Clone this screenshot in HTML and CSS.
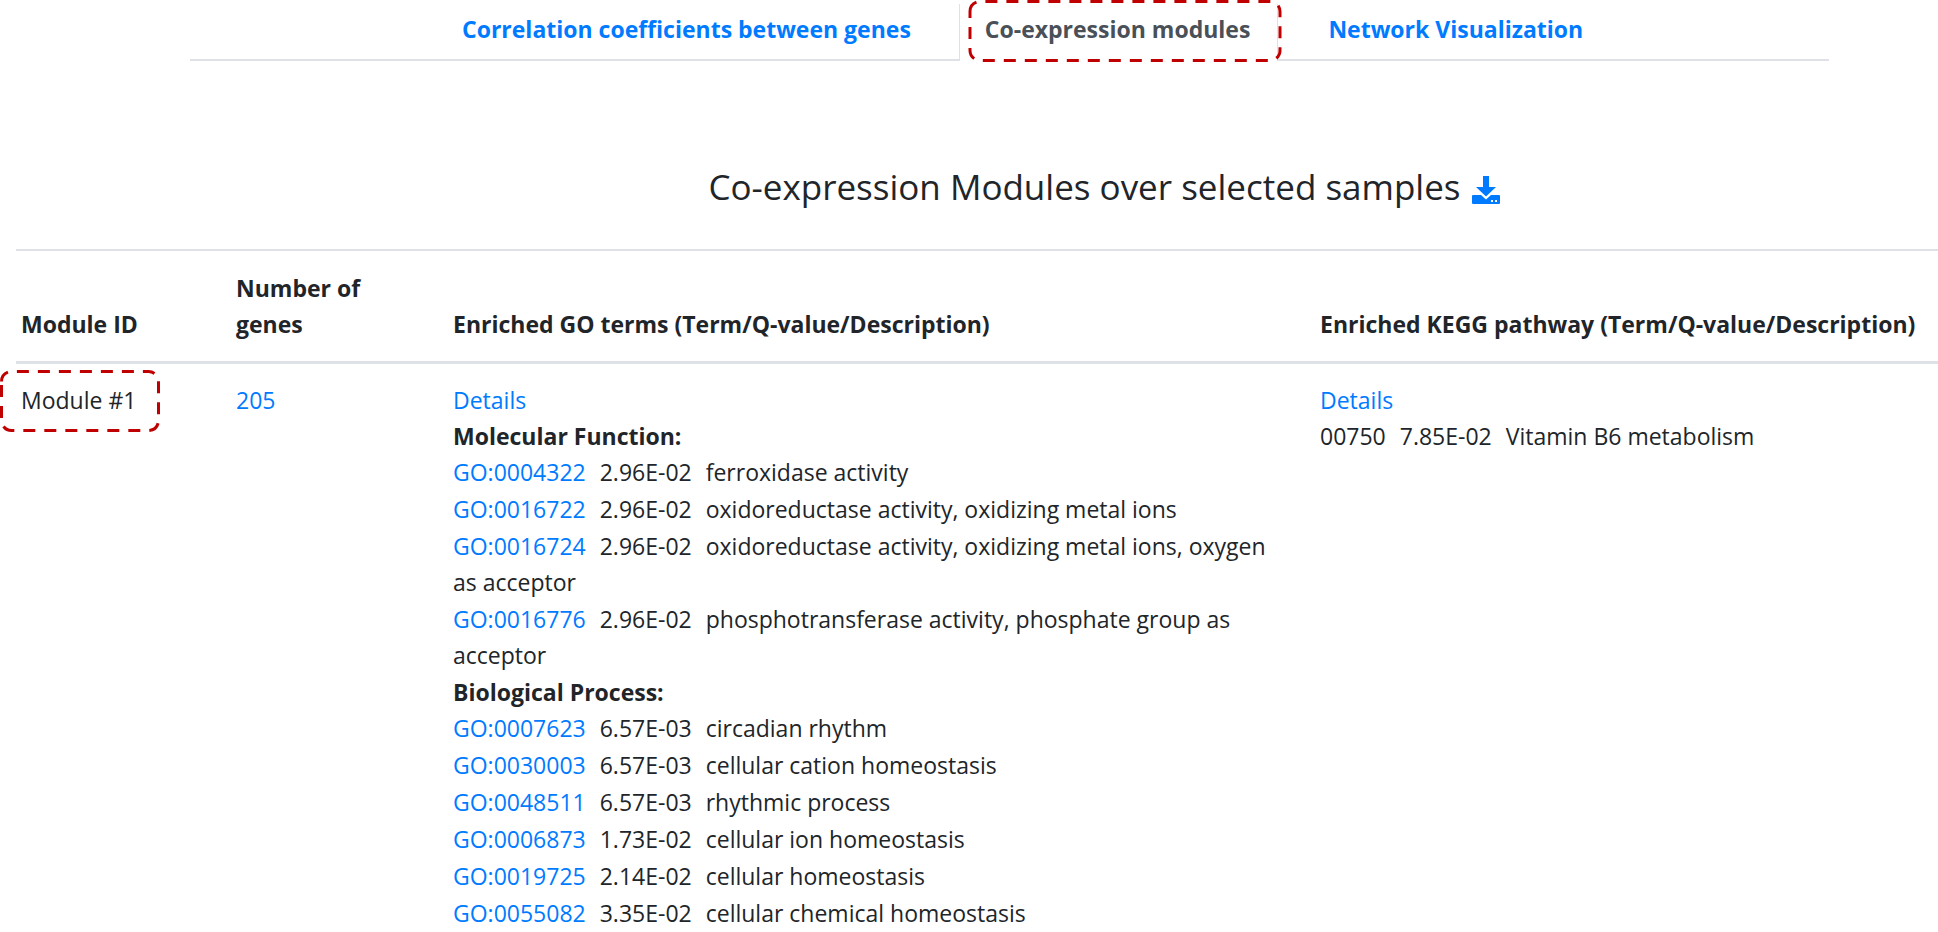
FILE: index.html
```html
<!DOCTYPE html>
<html lang="en">
<head>
<meta charset="utf-8">
<title>Co-expression modules</title>
<link rel="stylesheet" href="styles.css">
</head>
<body>
<nav class="tabs" aria-label="Results">
  <a class="tab" href="#correlation">Correlation coefficients between genes</a>
  <a class="tab tab-active" href="#modules" aria-current="page">Co-expression modules
    <svg class="outline outline-tab" width="314" height="62" aria-hidden="true"><path d="M2 11.500a10 10 0 0 1 10-10h290a10 10 0 0 1 10 10v39a10 10 0 0 1-10 10h-290a10 10 0 0 1-10-10z"/></svg>
  </a>
  <a class="tab" href="#network">Network Visualization</a>
</nav>
<main>
  <h3 class="title">Co-expression Modules over selected samples
    <a class="download" href="#download" aria-label="Download"><svg width="28" height="28" viewBox="0 0 28 28" aria-hidden="true"><path d="M11 0h6v11h7L14 20.500 4 11h7z"/><path d="M1 19h8l5 4.500 5-4.500h8q1 0 1 1v7q0 1-1 1H1q-1 0-1-1v-7q0-1 1-1z"/><path class="dot" d="M19 24h2v2h-2zM23 24h2v2h-2z"/></svg></a>
  </h3>
  <table class="modules">
    <thead>
      <tr>
        <th class="col-id">Module ID</th>
        <th class="col-count">Number of genes</th>
        <th class="col-go">Enriched GO terms (Term/Q-value/Description)</th>
        <th>Enriched KEGG pathway (Term/Q-value/Description)</th>
      </tr>
    </thead>
    <tbody>
      <tr>
        <td class="marked">Module #1
          <svg class="outline outline-cell" width="160" height="62" aria-hidden="true"><path d="M1.500 11.500a10 10 0 0 1 10-10h137a10 10 0 0 1 10 10v39a10 10 0 0 1-10 10h-137a10 10 0 0 1-10-10z"/></svg>
        </td>
        <td><a href="#genes">205</a></td>
        <td class="go">
          <a href="#go">Details</a>
          <h4 class="group">Molecular Function:</h4>
          <ul class="terms">
            <li><a href="#t1">GO:0004322</a><span class="q">2.96E-02</span>ferroxidase activity</li>
            <li><a href="#t2">GO:0016722</a><span class="q">2.96E-02</span>oxidoreductase activity, oxidizing metal ions</li>
            <li><a href="#t3">GO:0016724</a><span class="q">2.96E-02</span>oxidoreductase activity, oxidizing metal ions, oxygen as acceptor</li>
            <li><a href="#t4">GO:0016776</a><span class="q">2.96E-02</span>phosphotransferase activity, phosphate group as acceptor</li>
          </ul>
          <h4 class="group">Biological Process:</h4>
          <ul class="terms">
            <li><a href="#t5">GO:0007623</a><span class="q">6.57E-03</span>circadian rhythm</li>
            <li><a href="#t6">GO:0030003</a><span class="q">6.57E-03</span>cellular cation homeostasis</li>
            <li><a href="#t7">GO:0048511</a><span class="q">6.57E-03</span>rhythmic process</li>
            <li><a href="#t8">GO:0006873</a><span class="q">1.73E-02</span>cellular ion homeostasis</li>
            <li><a href="#t9">GO:0019725</a><span class="q">2.14E-02</span>cellular homeostasis</li>
            <li><a href="#t10">GO:0055082</a><span class="q">3.35E-02</span>cellular chemical homeostasis</li>
          </ul>
        </td>
        <td>
          <a href="#kegg">Details</a>
          <ul class="terms">
            <li>00750<span class="q">7.85E-02</span>Vitamin B6 metabolism</li>
          </ul>
        </td>
      </tr>
    </tbody>
  </table>
</main>
</body>
</html>
```
FILE: styles.css
```css
* { box-sizing: border-box; }
body {
  margin: 0;
  background: #fff;
  color: #212529;
  font: 400 23px/36px "Segoe UI", "Open Sans", "Noto Sans", sans-serif;
}
a { color: #007bff; text-decoration: none; }

.tabs {
  display: flex;
  margin: 0 109px 0 190px;
  padding-top: 4px;
  font-weight: 700;
}
.tabs::before, .tabs::after { content: ""; border-bottom: 2px solid #dee2e6; }
.tabs::before { width: 248px; }
.tabs::after { flex: 1; }
.tab {
  padding: 7px 48px 12px 24px;
  border-bottom: 2px solid #dee2e6;
  white-space: nowrap;
}
.tab:last-child { padding-left: 50px; }
.tab-active {
  position: relative;
  padding: 7px 27px 14px 25px;
  border: 1px solid #dee2e6;
  border-width: 0 1px;
  color: #495057;
}
.outline {
  position: absolute;
  fill: none;
  stroke: #c00000;
  stroke-width: 3;
  stroke-dasharray: 12 9;
}
.outline-tab { top: -4px; left: 8px; }
.outline-cell { top: 6px; left: -16px; }

.title {
  margin: 102px 0 38px;
  padding-left: 270px;
  text-align: center;
  font-size: 35px;
  line-height: 48px;
  font-weight: 500;
}
.download { margin-left: 2px; }
.download svg { fill: #007bff; vertical-align: -4px; }
.download .dot { fill: #fff; }

.modules {
  width: calc(100% - 16px);
  margin-left: 16px;
  border-collapse: separate;
  border-spacing: 0;
  table-layout: fixed;
}
.modules th, .modules td {
  padding: 18px 5px;
  text-align: left;
  vertical-align: top;
}
.modules th {
  padding: 19px 5px;
  border-top: 2px solid #dee2e6;
  border-bottom: 3px solid #dee2e6;
  vertical-align: bottom;
  font-weight: 700;
}
.modules td { padding-bottom: 0; }
.col-id { width: 215px; }
.col-count { width: 217px; }
.modules .col-count { padding-right: 40px; }
.col-go { width: 867px; }
.modules .go { padding-right: 40px; }
.marked { position: relative; }
.group { margin: 0; font-size: 23px; font-weight: 700; }
.terms { margin: 0; padding: 0; list-style: none; }
.terms li { padding-bottom: 1px; }
.q { margin: 0 14px; }
```
